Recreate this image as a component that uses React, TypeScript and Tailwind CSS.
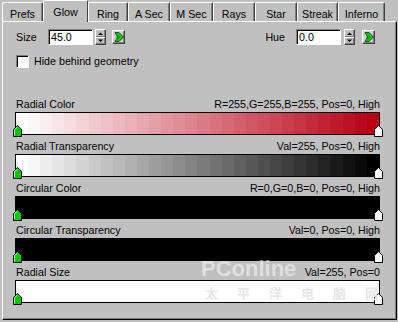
import React from "react";

type Rgb = [number, number, number];

const raised =
  "border border-t-white border-l-white border-r-[#404040] border-b-[#404040] shadow-[inset_-1px_-1px_0_#808080]";
const sunken =
  "border border-t-[#808080] border-l-[#808080] border-r-white border-b-white shadow-[inset_1px_1px_0_#000]";

function steps(from: Rgb, to: Rgb, n: number) {
  return Array.from({ length: n }, (_, i) => {
    const t = i / (n - 1);
    const c = from.map((v, k) => Math.round(v + (to[k] - v) * t));
    return `rgb(${c[0]},${c[1]},${c[2]})`;
  });
}

const TABS = [
  { label: "Prefs", w: "w-[41px]" },
  { label: "Glow", w: "w-[45px]", active: true },
  { label: "Ring", w: "w-[40px]" },
  { label: "A Sec", w: "w-[42px]" },
  { label: "M Sec", w: "w-[43px]" },
  { label: "Rays", w: "w-[42px]" },
  { label: "Star", w: "w-[42px]" },
  { label: "Streak", w: "w-[41px]" },
  { label: "Inferno", w: "w-[47px]" },
];

function Tab({ label, w, active }: { label: string; w: string; active?: boolean }) {
  if (active) {
    return (
      <div
        className={`relative z-10 -mb-px flex h-[22px] justify-center rounded-t-[2px] border-l border-t border-r border-l-white border-t-white border-r-[#404040] bg-[#c0c0c0] pt-[3px] ${w}`}
      >
        {label}
      </div>
    );
  }
  return (
    <div
      className={`flex h-[19px] justify-center rounded-t-[2px] border-l border-t border-r border-l-white border-t-white border-r-[#404040] bg-[#c0c0c0] pt-[3px] shadow-[inset_-1px_0_0_#808080] ${w}`}
    >
      {label}
    </div>
  );
}

function Spinner() {
  return (
    <div className={`flex h-[16px] w-[11px] flex-col bg-[#c0c0c0] ${raised}`}>
      <svg width="9" height="14" viewBox="0 0 9 14" className="block">
        <polygon points="2,5 4.5,2.5 7,5" fill="#000" />
        <line x1="0" y1="6.5" x2="9" y2="6.5" stroke="#808080" />
        <line x1="0" y1="7.5" x2="9" y2="7.5" stroke="#fff" />
        <polygon points="2,9.5 7,9.5 4.5,12" fill="#000" />
      </svg>
    </div>
  );
}

function GoButton() {
  return (
    <div className={`flex h-[14px] w-[13px] items-center justify-center bg-[#d0d0d0] ${raised}`}>
      <svg width="10" height="10" viewBox="0 0 10 10">
        <polygon points="1,0.5 5,0.5 9.5,5 5,9.5 1,9.5 3.5,5" fill="#00b000" stroke="#004000" strokeWidth="0.8" />
        <polyline points="2.5,2 5,2 7.5,5 5,8 2.5,8" fill="none" stroke="#80ff80" strokeWidth="0.8" strokeDasharray="1 1" />
      </svg>
    </div>
  );
}

function Marker({ right, white }: { right?: boolean; white?: boolean }) {
  return (
    <svg
      width="9"
      height="12"
      viewBox="0 0 9 12"
      className={`absolute bottom-[-3px] ${right ? "right-[-4px]" : "left-[-3px]"}`}
    >
      <polygon
        points="0.5,11.5 0.5,4.5 4.5,0.5 8.5,4.5 8.5,11.5"
        fill={white ? "#fff" : "#00c800"}
        stroke="#000"
        strokeWidth="1"
      />
      {!white && <polyline points="1.5,10.5 1.5,4.9 4.5,1.9" fill="none" stroke="#b0ffb0" strokeWidth="1" />}
    </svg>
  );
}

function Section({
  label,
  info,
  colors,
  solid,
}: {
  label: string;
  info: string;
  colors?: string[];
  solid?: string;
}) {
  return (
    <div className="mb-[5px] flex flex-col">
      <div className="flex h-[14px] justify-between pl-[1px] leading-[13px]">
        <span>{label}</span>
        <span>{info}</span>
      </div>
      <div className="relative h-[23px] border border-black">
        {colors ? (
          <div className="flex h-full">
            {colors.map((c, i) => (
              <div key={i} className="h-full flex-1" style={{ backgroundColor: c }} />
            ))}
          </div>
        ) : (
          <div className="h-full" style={{ backgroundColor: solid }} />
        )}
        <Marker />
        <Marker right white />
      </div>
    </div>
  );
}

export default function App() {
  const radialColor = steps([255, 255, 255], [184, 0, 20], 30);
  const radialTrans = steps([255, 255, 255], [0, 0, 0], 30);

  return (
    <div className="relative h-[322px] w-[398px] overflow-hidden bg-[#c0c0c0] pl-[2px] font-['Liberation_Sans',Arial,sans-serif] text-[10.7px] text-black">
      <div className="flex h-[21px] items-end">
        {TABS.map((t) => (
          <Tab key={t.label} {...t} />
        ))}
      </div>

      <div className="flex h-[299px] w-[395px] flex-col border border-t-white border-l-white border-r-black border-b-black bg-[#c0c0c0] pl-[12px] pr-[16px] pt-[7px] shadow-[inset_-1px_-1px_0_#808080]">
        <div className="flex h-[16px] items-center">
          <span className="w-[33px] pl-[1px]">Size</span>
          <div className={`flex h-[16px] w-[45px] items-center bg-white pl-[2px] ${sunken}`}>45.0</div>
          <div className="ml-[2px]">
            <Spinner />
          </div>
          <div className="ml-[6px]">
            <GoButton />
          </div>
          <span className="ml-auto mr-[11px]">Hue</span>
          <div className={`flex h-[16px] w-[45px] items-center bg-white pl-[2px] ${sunken}`}>0.0</div>
          <div className="ml-[3px]">
            <Spinner />
          </div>
          <div className="ml-[7px] mr-[5px]">
            <GoButton />
          </div>
        </div>

        <div className="mt-[10px] flex h-[13px] items-center">
          <div className={`ml-[1px] h-[13px] w-[13px] bg-white ${sunken}`} />
          <span className="ml-[5px]">Hide behind geometry</span>
        </div>

        <div className="mt-[30px] flex flex-col">
          <Section label="Radial Color" info="R=255,G=255,B=255, Pos=0, High" colors={radialColor} />
          <Section label="Radial Transparency" info="Val=255, Pos=0, High" colors={radialTrans} />
          <Section label="Circular Color" info="R=0,G=0,B=0, Pos=0, High" solid="#000" />
          <Section label="Circular Transparency" info="Val=0, Pos=0, High" solid="#000" />
          <Section label="Radial Size" info="Val=255, Pos=0" solid="#fff" />
        </div>
      </div>

      {/* watermark from the source capture */}
      <div className="pointer-events-none absolute left-[201px] top-[257px] text-[22px] font-bold leading-[24px] text-white opacity-50">
        PConline
      </div>
      <div className="pointer-events-none absolute left-[205px] top-[285px] flex gap-[19px] font-['Noto_Sans_CJK_SC',sans-serif] text-[13px] font-bold leading-[16px] text-[#e6e6e6]">
        <span>太</span>
        <span>平</span>
        <span>洋</span>
        <span>电</span>
        <span>脑</span>
        <span>网</span>
      </div>
    </div>
  );
}
